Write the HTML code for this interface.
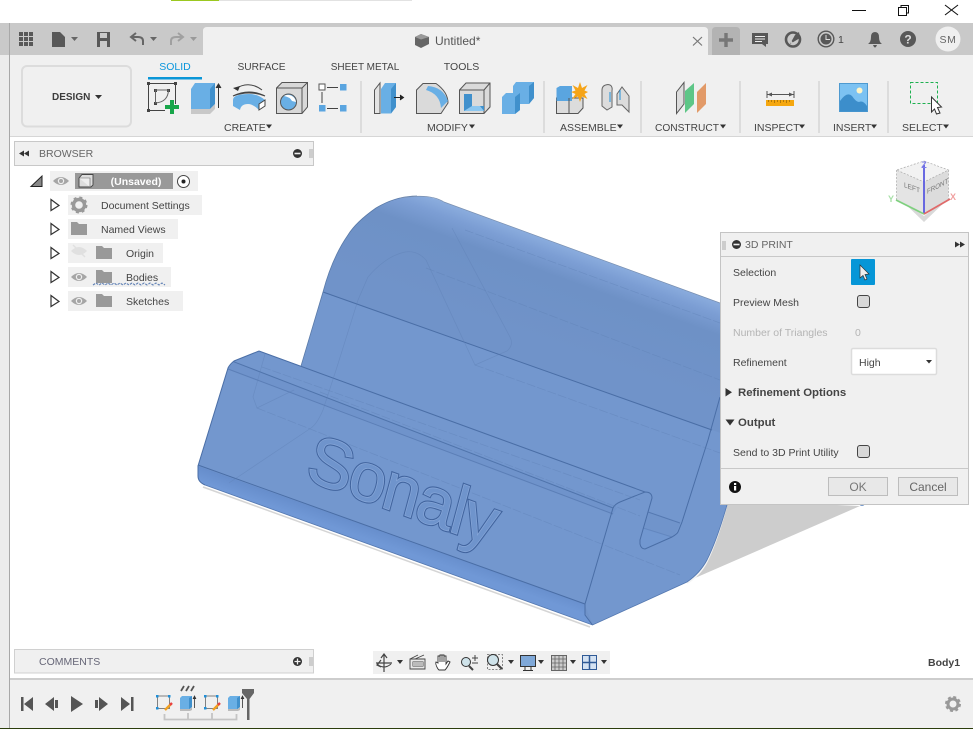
<!DOCTYPE html>
<html>
<head>
<meta charset="utf-8">
<title>Untitled - 3D Print</title>
<style>
html,body{margin:0;padding:0;background:#fff;width:973px;height:729px;overflow:hidden}
svg{display:block;position:absolute;left:0;top:0}
text{font-family:"Liberation Sans",sans-serif;font-size:10.5px;fill:#444}
.c{text-anchor:middle}
.b{font-weight:bold}
.ln{fill:none;stroke:#4a6ea6;stroke-width:1}
.gh{fill:none;stroke:#5c7fb3;stroke-width:.7;opacity:.42}
.ic{fill:none;stroke:#555;stroke-width:1.2}
</style>
</head>
<body>
<svg width="973" height="729" viewBox="0 0 973 729" xmlns="http://www.w3.org/2000/svg">
<defs>
<linearGradient id="backG" gradientUnits="userSpaceOnUse" x1="444" y1="202" x2="410" y2="296">
<stop offset="0" stop-color="#8badde"/><stop offset=".13" stop-color="#7c9ed4"/><stop offset=".32" stop-color="#6e91c6"/><stop offset="1" stop-color="#7093c9"/>
</linearGradient>
<linearGradient id="botG" gradientUnits="userSpaceOnUse" x1="198" y1="466" x2="193.500" y2="479">
<stop offset="0" stop-color="#668dcb"/><stop offset="1" stop-color="#7098d6"/>
</linearGradient>
<g id="eye"><path d="M0 5Q8-3 16 5Q8 13 0 5Z" fill="#a6a6a6"/><circle cx="8" cy="5" r="3.2" fill="#f0f0f0"/><circle cx="8" cy="5" r="2" fill="#a6a6a6"/></g>
<path id="folder" d="M0 0H6L8 2H16V13H0Z" fill="#999"/>
<path id="tri" d="M1 0L9 6L1 11Z" fill="#fff" stroke="#333" stroke-width="1.2"/>
</defs>

<!-- window chrome -->
<rect width="973" height="729" fill="#fff"/>
<rect x="171" y="0" width="48" height="1" fill="#9bc820"/>
<rect x="219" y="0" width="193" height="1" fill="#e2e2e2"/>
<path d="M852 10.5H866" stroke="#111" stroke-width="1"/>
<path d="M898.5 7.5H906.5V15.5H898.5ZM901 7.5V5.5H908.5V13H906.5" fill="none" stroke="#111"/>
<path d="M945 5L958 15M958 5L945 15" stroke="#111" stroke-width="1.1"/>

<rect x="0" y="23" width="973" height="32" fill="#c9c9c9"/>
<rect x="0" y="55" width="9" height="674" fill="#ececec"/>
<rect x="9" y="23" width="1" height="706" fill="#a8a8a8"/>
<rect x="10" y="55" width="963" height="81" fill="#f0f0f0"/>
<rect x="10" y="136" width="963" height="1" fill="#d6d6d6"/>
<path d="M203 55V31Q203 27 207 27H704Q708 27 708 31V55Z" fill="#f0f0f0"/>
<path d="M712 55V31Q712 27 716 27H736Q740 27 740 31V55Z" fill="#b3b3b3"/>
<path d="M726 33V47M719 40H733" stroke="#777" stroke-width="3.4"/>

<!-- quick access -->
<g fill="#585858">
<path d="M19 32h4v4h-4zM24 32h4v4h-4zM29 32h4v4h-4zM19 37h4v4h-4zM24 37h4v4h-4zM29 37h4v4h-4zM19 42h4v4h-4zM24 42h4v4h-4zM29 42h4v4h-4z"/>
<path d="M52 32H60L65 37V47H52Z"/>
<path d="M71 37H78L74.500 41Z" fill="#666"/>
<path d="M97 32H110V47H97ZM100 33V38H107V33ZM100 41V47H107V41Z" fill-rule="evenodd"/>
<path d="M150 37H157L153.500 41Z" fill="#666"/>
<path d="M190 37H197L193.500 41Z" fill="#999"/>
</g>
<path d="M143 45V41Q143 37 138 37H132M136 33L131 37L136 41" fill="none" stroke="#666" stroke-width="2"/>
<path d="M171 45V41Q171 37 176 37H182M178 33L183 37L178 41" fill="none" stroke="#a0a0a0" stroke-width="2"/>

<!-- document tab -->
<path d="M415 37L421 34L429 37V44L421 48L415 45Z" fill="#666"/><path d="M415 37L421 39.500L429 37L421 34Z" fill="#999"/>
<text x="435" y="45" style="font-size:12px;fill:#555">Untitled*</text>
<path d="M693 37L702 45.500M702 37L693 45.500" stroke="#777" stroke-width="1.2"/>

<!-- tab bar right icons -->
<path d="M752 33H768V44H766V47L762 44H752Z" fill="#585858"/><path d="M755 36.500H765M755 39H765M755 41.500H762" stroke="#eee" stroke-width="1"/>
<circle cx="793" cy="39.500" r="7" fill="none" stroke="#585858" stroke-width="2.600"/><path d="M790 44L795 35L799 32L800 38Z" fill="#585858"/><path d="M789 39L793 44" stroke="#c9c9c9" stroke-width="1.500"/>
<circle cx="826" cy="39" r="7.800" fill="none" stroke="#585858" stroke-width="1.400"/><circle cx="826" cy="39" r="5.500" fill="#585858"/><path d="M826 35V39.500H830" stroke="#ddd" fill="none"/>
<text x="838" y="43" style="font-size:10.500px;fill:#444">1</text>
<path d="M868 44Q871 42 871 37Q871 32 875 32Q879 32 879 37Q879 42 882 44Z M873 45H877Q876 47.500 875 47.500Q874 47.500 873 45Z" fill="#585858"/>
<circle cx="908" cy="39" r="8" fill="#585858"/><text x="908" y="43.500" class="c b" style="font-size:12px;fill:#ddd">?</text>
<circle cx="948" cy="39" r="12.500" fill="#efefef"/><text x="948" y="43" class="c" style="font-size:10.500px;letter-spacing:.6px;fill:#666">SM</text>

<!-- design button -->
<rect x="22" y="66" width="109" height="60.500" rx="5" fill="#f0f0f0" stroke="#dcdcdc" stroke-width="2"/>
<text x="52" y="100" class="b" style="font-size:10px;fill:#3c3c3c">DESIGN</text>
<path d="M95 95H102L98.500 99Z" fill="#333"/>

<!-- ribbon tabs -->
<text x="175" y="70" class="c" style="fill:#0a96dc">SOLID</text>
<rect x="148" y="77" width="54" height="2.500" fill="#0a96d7"/>
<text x="261.500" y="70" class="c" style="font-size:10.200px">SURFACE</text>
<text x="365" y="70" class="c" style="font-size:10px">SHEET METAL</text>
<text x="461.500" y="70" class="c">TOOLS</text>

<!-- separators -->
<g fill="#dcdcdc"><rect x="360" y="81" width="2" height="52"/><rect x="543" y="81" width="2" height="52"/><rect x="640" y="81" width="2" height="52"/><rect x="739" y="81" width="2" height="52"/><rect x="818" y="81" width="2" height="52"/><rect x="887" y="81" width="2" height="52"/></g>

<!-- create icons -->
<path d="M148.500 83.500H175.500V104M148.500 83.500V110.500H165" fill="none" stroke="#444"/>
<g fill="#444"><rect x="147" y="82" width="3" height="3"/><rect x="174" y="82" width="3" height="3"/><rect x="147" y="109" width="3" height="3"/><rect x="154" y="89" width="3" height="3"/><rect x="167" y="89" width="3" height="3"/><rect x="154" y="102" width="3" height="3"/></g>
<path d="M155.500 103V90H168.500Q168 102 155.500 103Z" fill="none" stroke="#666"/>
<path d="M165 105H170V100H174V105H179V109H174V114H170V109H165Z" fill="#18a64a"/>

<path d="M191 89L195 83H215V104L210 109H191Z" fill="#69afe5"/>
<path d="M210 89L215 83V104L210 109Z" fill="#4090cc"/>
<path d="M191 109H210L215 104V109L210 114H191Z" fill="#c8c8c8"/>
<path d="M218.500 108V85M216 88L218.500 84L221 88" stroke="#333" fill="#333"/>

<path d="M233 100Q233 94 249 94Q258 94 265 100V106L259 110Q253 104 248 104Q241 104 240 110L233 106Z" fill="#69afe5"/>
<path d="M233 96Q249 88 265 96Q249 90 233 96" fill="none" stroke="#444"/>
<path d="M235 89Q249 80 262 90" fill="none" stroke="#444"/>
<path d="M233 88L240 86L238 91Z" fill="#333"/>
<path d="M259 104L265 100V106L259 110Z" fill="#fff" stroke="#444"/>

<path d="M276.500 88L282 82.500H307.500V107L302 113.500H276.500Z" fill="#d8d8d8" stroke="#555"/>
<path d="M276.500 88H302V113.500M302 88L307.500 82.500" fill="none" stroke="#555"/>
<circle cx="288.500" cy="102" r="8" fill="#69afe5" stroke="#555"/><path d="M284 96A8 8 0 0 1 296 102L292 101Q290 97 284 96Z" fill="#fff"/>

<rect x="319" y="84" width="6" height="6" fill="#fff" stroke="#555"/><rect x="340" y="84" width="6.500" height="6.500" fill="#5aa5e0"/><rect x="319" y="105" width="6.500" height="6.500" fill="#5aa5e0"/><rect x="340" y="105" width="6.500" height="6.500" fill="#5aa5e0"/>
<path d="M327 87.500H338M322 92V103M327 108.500H338" stroke="#444"/>

<text x="224" y="131" style="fill:#444">CREATE</text><path d="M266 124.500H272L269 128.500Z" fill="#333"/>

<!-- modify icons -->
<path d="M374.500 90L380 83V113.500H374.500Z" fill="#e4e4e4" stroke="#555"/>
<path d="M381 89L385 83H396V107L391 113.500H381Z" fill="#69afe5"/><path d="M391 89L396 83V107L391 113.500Z" fill="#4090cc"/>
<path d="M394 97.500H402M400 95L403.500 97.500L400 100" stroke="#222" fill="#222"/>

<path d="M416.500 90L423 83.500H436Q448 92 448 103L441 113.500H416.500Z" fill="#dadada" stroke="#555"/>
<path d="M428 86Q443 87 448 101L441 108Q440 94 426 90Z" fill="#69afe5"/>

<path d="M459.500 90L466 83H490V107L484 113.500H459.500Z" fill="#dadada" stroke="#555"/><path d="M459.500 90H484V113.500M484 90L490 83" fill="none" stroke="#555"/>
<path d="M464 94H472V106H484V111H464Z" fill="#4090cc"/><path d="M472 106L480 106 484 111H464L472 106Z" fill="#8cc7f0"/>

<path d="M502 97L506 93H513V86L516 82H534V98L529 104H520V110L515 114H502Z" fill="#69afe5"/>
<path d="M529 86L534 82V98L529 104ZM515 97L520 93V110L515 114Z" fill="#4090cc"/>
<text x="427" y="131">MODIFY</text><path d="M469 124.500H475L472 128.500Z" fill="#333"/>

<!-- assemble icons -->
<path d="M556.500 98H583V108L578 113.500H556.500Z" fill="#dcdcdc" stroke="#555"/>
<path d="M556.500 88L560 86H572V101H556.500Z" fill="#5aa5e0"/>
<path d="M569 98V113M575 98L583 98" stroke="#555" fill="none"/>
<path d="M580 82L582 88L587.500 85L584.500 90.500L588 92L584.500 94L587.500 99L582 96.500L580 102L578 96.500L572 99L575.500 94L571 92L575.500 90.500L572.500 85L578 88Z" fill="#f5a418"/>
<path d="M602 90Q602 85 608 84.500Q613 85 612 91V107L607 110L602 106Z" fill="#dcdcdc" stroke="#666"/>
<path d="M617 94L622 87L629 96V112L622 105H617Z" fill="#dcdcdc" stroke="#666"/>
<path d="M610 92V102M620 90V100" stroke="#1f8fd8" stroke-width="1"/>
<text x="560" y="131">ASSEMBLE</text><path d="M617 124.500H623L620 128.500Z" fill="#333"/>

<!-- construct -->
<path d="M676.500 92L684 82.500V104L676.500 113.500Z" fill="#dcdcdc" stroke="#555"/>
<path d="M685 91L694 83V104L685 113Z" fill="#5ec687"/>
<path d="M697 92L706 83V104L697 113Z" fill="#e29a68"/>
<text x="655" y="131" style="font-size:10.200px">CONSTRUCT</text><path d="M720 124.500H726L723 128.500Z" fill="#333"/>

<!-- inspect -->
<path d="M767 91V98M794 91V98M767.500 94.500H793.500" stroke="#555" fill="none"/>
<path d="M772 92.500L767.500 94.500L772 96.500ZM789 92.500L793.500 94.500L789 96.500Z" fill="#555"/>
<rect x="766" y="100" width="28" height="6" fill="#f5a70f"/>
<path d="M768.500 100v2M771.500 100v2M774.500 100v3M777.500 100v2M780.500 100v3M783.500 100v2M786.500 100v3M789.500 100v2" stroke="#a26d08" stroke-width=".8"/>
<text x="754" y="131">INSPECT</text><path d="M799 124.500H805L802 128.500Z" fill="#333"/>

<!-- insert -->
<rect x="839.500" y="83.500" width="28" height="28" fill="#7cc2f2" stroke="#4e9ad0"/>
<circle cx="859.500" cy="90.500" r="3" fill="#fff5c8"/>
<path d="M840 108V101Q847 91 852 96Q856 102 859 102Q863 100 867 106V111.500H840Z" fill="#3c8ecb"/>
<text x="833" y="131">INSERT</text><path d="M871 124.500H877L874 128.500Z" fill="#333"/>

<!-- select -->
<rect x="910.500" y="82.500" width="27" height="21" fill="none" stroke="#1eb050" stroke-dasharray="3 2"/>
<path d="M931.500 97L941.500 107L937.500 107.500L940 113L936.500 114L934.500 109L931.500 112Z" fill="#fff" stroke="#333" stroke-width="1"/>
<text x="902" y="131">SELECT</text><path d="M943 124.500H949L946 128.500Z" fill="#333"/>

<!-- canvas -->
<rect x="10" y="137" width="963" height="541" fill="#fff"/>

<!-- shadow -->
<path d="M723 500L860 506L695 578Z" fill="#cdcdcd"/>
<circle cx="862" cy="503" r="3" fill="#6d92c8"/>
<path d="M203 487L590 627" fill="none" stroke="#d5d5d5" stroke-width="1.500"/>
<path d="M687 583Q700 575 707 561Q717 540 726 507" fill="none" stroke="#f4f4f4" stroke-width="2"/>

<!-- model -->
<path d="M417 196Q432 196 444 202L800 332V460L727 505Q717 540 707 560Q700 573 693 577L687 582L592.500 625L205 485Q198 482 198 476V466L228 368Q230 364 234 361L259 351L301 366L323 292Q332 258 348 235Q356 222 376 208Q396 196 417 196Z" fill="url(#backG)"/>
<!-- lighter areas below the main ridge and on the front face -->
<path d="M323 292L301 366L259 351L234 361L228 368L198 466L585 605L592.500 625L687 582L693 577Q700 573 707 560Q717 540 727 505L800 460V460L712 430Z" fill="#7397ce"/>
<path d="M198 466L585 604V615L592.500 625L205 485Q198 482 198 476Z" fill="url(#botG)"/>
<path d="M228 369L233.600 361.700L617 508L613 514Z" fill="#6f93cb"/>
<path d="M648 512L680 523Q678 530 672 537L643 528Z" fill="#7094cb"/>
<path d="M643 528L672 537L645 549Q640 549 640 542Z" fill="#7197d0"/>
<!-- edges -->
<path class="ln" d="M323 292L712 430" stroke-width="1.200"/>
<path class="ln" d="M233.600 361.700L613 508" opacity=".85"/>
<path class="ln" d="M228 369L613 514" opacity=".55"/>
<path class="ln" d="M198 465L585 604"/>
<path class="ln" d="M613 508L585 604V615L592.500 625"/>
<path class="ln" d="M613 508Q615 504 620 502L645 492Q652 492 652 498L640 540V544Q641 549 645 549L672 537Q677 534 678 532L682 522L708 440L720 397"/>
<path class="ln" d="M259 351L645 492" stroke-width="1.200"/>
<path class="ln" d="M648 512L680 523" opacity=".7"/>
<path class="ln" d="M643 528L672 537" opacity=".35"/>
<path class="ln" d="M259 351L234 361Q230 364 228 368L198 466V476Q198 482 205 485"/>
<path d="M205 485L592.500 625L687 582Q700 573 707 560Q717 540 727 505" fill="none" stroke="#5478b0" stroke-width=".8"/>
<path d="M417 196Q396 196 376 208Q356 222 348 235Q332 258 323 292L301 366" fill="none" stroke="#5a7aa8" stroke-width=".8"/>
<path d="M400 198Q430 193 444 202L720 303" fill="none" stroke="#7a90b0" stroke-width=".7"/>
<!-- ghost lines -->
<path class="gh" d="M452 228L510 337Q514 345 507 351L475 365L426 260Q417 250 405 252Q386 256 368 277L358 300L337 367L323 410Q317 424 311 428L229 483"/>
<path class="gh" d="M465 230L720 323" stroke-dasharray="9 2"/>
<path class="gh" d="M426 268L720 380" stroke-dasharray="9 2"/>
<path class="gh" d="M475 365L720 453" stroke-dasharray="9 2"/>
<path class="gh" d="M265 354L253 397L257 408L294 390"/>
<path class="gh" d="M257 408L680 575" stroke-dasharray="9 2"/>
<path class="gh" d="M262 367L640 500" stroke-dasharray="9 2"/>
<path class="gh" d="M320 392L640 516" stroke-dasharray="9 2"/>
<!-- embossed name -->
<text transform="matrix(.94 .34 -.26 .97 304 479)" style="font-size:68px;letter-spacing:-1.700px;fill:#6a8ec6;stroke:#41649e;stroke-width:2.800">Sonaly</text>
<text transform="matrix(.94 .34 -.26 .97 304 479)" aria-hidden="true" style="font-size:68px;letter-spacing:-1.700px;fill:#6f94cc;stroke:#86a6d8;stroke-width:.7">Sonaly</text>

<!-- browser -->
<rect x="14.500" y="141.500" width="299" height="24" fill="#f0f0f0" stroke="#c8c8c8"/>
<path d="M24 150.500L19 153.500L24 156.500ZM29 150.500L24 153.500L29 156.500Z" fill="#333"/>
<text x="39" y="157" style="fill:#666">BROWSER</text>
<circle cx="297.500" cy="153.500" r="4.500" fill="#333"/><rect x="294.500" y="152.700" width="6" height="1.600" fill="#f0f0f0"/>
<path d="M310 149V158M312 149V158" stroke="#999" stroke-width=".8"/>

<path d="M31 186.500L42 176V186.500Z" fill="#888" stroke="#222"/>
<rect x="50" y="171" width="148" height="20" fill="#f0f0f0"/>
<use href="#eye" x="53" y="176"/>
<rect x="75" y="173" width="98" height="16" fill="#999"/>
<path d="M79 178L82 174.500H93V185L91 187H79Z" fill="#ddd" stroke="#444" stroke-width=".9"/>
<path d="M79 178H90V187" fill="#eee" stroke="#666" stroke-width=".6"/>
<text x="136" y="185" class="c b" style="fill:#fff">(Unsaved)</text>
<circle cx="183.500" cy="181.500" r="6" fill="#fff" stroke="#444"/><circle cx="183.500" cy="181.500" r="2" fill="#222"/>

<g>
<rect x="68" y="195" width="134" height="20" fill="#f0f0f0"/>
<rect x="68" y="219" width="110" height="20" fill="#f0f0f0"/>
<rect x="68" y="243" width="95" height="20" fill="#f0f0f0"/>
<rect x="68" y="267" width="103" height="20" fill="#f0f0f0"/>
<rect x="68" y="291" width="115" height="20" fill="#f0f0f0"/>
</g>
<use href="#tri" x="50" y="199.500"/><use href="#tri" x="50" y="223.500"/><use href="#tri" x="50" y="247.500"/><use href="#tri" x="50" y="271.500"/><use href="#tri" x="50" y="295.500"/>
<!-- gear -->
<circle cx="79" cy="205" r="5.500" fill="none" stroke="#999" stroke-width="3.400"/>
<circle cx="79" cy="205" r="7.500" fill="none" stroke="#999" stroke-width="2" stroke-dasharray="3 2.900"/>
<text x="101" y="209">Document Settings</text>
<use href="#folder" x="71" y="222"/>
<text x="101" y="233">Named Views</text>
<path d="M71 251Q79 243 87 251Q79 259 71 251Z" fill="#e0e0e0"/><path d="M73 245L85 257" stroke="#e0e0e0" stroke-width="1.500"/>
<use href="#folder" x="96" y="246"/>
<text x="126" y="257">Origin</text>
<use href="#eye" x="71" y="272"/>
<use href="#folder" x="96" y="270"/>
<text x="126" y="281">Bodies</text>
<path d="M93 285l3-2 3 2 3-2 3 2 3-2 3 2 3-2 3 2 3-2 3 2 3-2 3 2 3-2 3 2 3-2 3 2 3-2 3 2 3-2 3 2 3-2 3 2 3-2 3 2" fill="none" stroke="#5f80b5" stroke-width="1.100" stroke-dasharray="2.500 1.200"/>
<use href="#eye" x="71" y="296"/>
<use href="#folder" x="96" y="294"/>
<text x="126" y="305">Sketches</text>

<!-- viewcube -->
<path d="M898 197L924 216L950 197L924 222Z" fill="#c9c9c9" opacity=".7"/>
<path d="M896.500 170L924 182V215L896.500 200Z" fill="#e4e4e4"/>
<path d="M948.500 170L924 182V215L948.500 200Z" fill="#dcdcdc"/>
<path d="M924 161L948.500 170L924 182L896.500 170Z" fill="#f2f2f2"/>
<path d="M924 161L948.500 170L924 182L896.500 170ZM896.500 170V200M948.500 170V200" fill="none" stroke="#aaa" stroke-width=".7" stroke-dasharray="2 1.500"/>
<path d="M924 165V214" stroke="#5a5ae0" stroke-width="1.800"/>
<path d="M924 214L896 200" stroke="#7fd07f" stroke-width="1.800"/>
<path d="M924 214L950 199" stroke="#e06a6a" stroke-width="1.800"/>
<text transform="matrix(.94 .34 0 1 904 187)" style="font-size:7px;fill:#777">LEFT</text>
<text transform="matrix(.88 -.46 0 1 927 194)" style="font-size:7px;fill:#777">FRONT</text>
<text x="924" y="168" class="c b" style="font-size:9px;fill:#7c7ce8">Z</text>
<text x="891" y="202" class="c b" style="font-size:9px;fill:#a8e0a8">Y</text>
<text x="953" y="200" class="c b" style="font-size:9px;fill:#f0a0a0">X</text>

<!-- 3D print panel -->
<rect x="720.500" y="232.500" width="248" height="272" fill="#f0f0f0" stroke="#c4c4c4"/>
<path d="M721 256.500H968M721 468.500H968" stroke="#c8c8c8"/>
<path d="M723 241V250M725 241V250" stroke="#999" stroke-width=".8"/>
<circle cx="736.500" cy="244.500" r="4.500" fill="#333"/><rect x="733.500" y="243.700" width="6" height="1.600" fill="#f0f0f0"/>
<text x="745" y="248" style="fill:#666">3D PRINT</text>
<path d="M955 241.500L960 244.500L955 247.500ZM960 241.500L965 244.500L960 247.500Z" fill="#333"/>

<text x="733" y="276">Selection</text>
<rect x="851" y="259" width="24" height="26" rx="1" fill="#0696d7"/>
<path d="M860 265L869 274L865 274.500L867 279L865 280L863 275.500L860 278Z" fill="#eee" stroke="#333" stroke-width=".7"/>

<text x="733" y="306">Preview Mesh</text>
<rect x="857.500" y="295.500" width="12" height="12" rx="2.500" fill="#d8d8d8" stroke="#444"/>

<text x="733" y="336" style="fill:#b4b4b4">Number of Triangles</text>
<text x="855" y="336" style="fill:#b4b4b4">0</text>

<text x="733" y="366">Refinement</text>
<rect x="851.500" y="348.500" width="85" height="26" rx="1.500" fill="#fff" stroke="#dcdcdc" stroke-width="1.500"/>
<text x="859" y="366">High</text>
<path d="M926 360H932L929 363.500Z" fill="#333"/>

<path d="M725.500 388V396.500L732 392.200Z" fill="#333"/>
<text x="738" y="396" class="b" style="font-size:11.400px">Refinement Options</text>
<path d="M725.500 419.500H734.500L730 425.500Z" fill="#333"/>
<text x="738" y="426" class="b" style="font-size:11.400px">Output</text>

<text x="733" y="456">Send to 3D Print Utility</text>
<rect x="857.500" y="445.500" width="12" height="12" rx="2.500" fill="#d8d8d8" stroke="#444"/>

<circle cx="735" cy="487" r="6" fill="#111"/>
<rect x="734" y="486" width="2.200" height="4.500" fill="#fff"/><rect x="734" y="483" width="2.200" height="2" fill="#fff"/>
<rect x="828.500" y="477.500" width="59" height="18" fill="#e8e8e8" stroke="#bdbdbd"/>
<text x="858" y="491" class="c" style="font-size:12px;fill:#777">OK</text>
<rect x="898.500" y="477.500" width="59" height="18" fill="#e8e8e8" stroke="#bdbdbd"/>
<text x="928" y="491" class="c" style="font-size:12px;fill:#666">Cancel</text>

<!-- comments -->
<rect x="14.500" y="649.500" width="299" height="23.500" fill="#f0f0f0" stroke="#d0d0d0"/>
<text x="39" y="665" style="fill:#667">COMMENTS</text>
<circle cx="297.500" cy="661.500" r="4.500" fill="#333"/><path d="M294.500 661.500H300.500M297.500 658.500V664.500" stroke="#f0f0f0" stroke-width="1.300"/>
<path d="M310 657V666M312 657V666" stroke="#999" stroke-width=".8"/>

<!-- nav bar -->
<rect x="373" y="651" width="237" height="23" fill="#f0f0f0"/>
<path d="M384 655V672M381 658L384 654L387 658M376 663H392M381 667L377 665 381 660" fill="none" stroke="#444" stroke-width="1.200"/>
<path d="M377 664Q384 670 391 664" fill="none" stroke="#444"/>
<path d="M397 660H403L400 664Z" fill="#333"/>
<path d="M410 659V669H425V659ZM413 662H423V666H413Z M410 659L418 655M415 659L424 655" fill="#e8e8e8" stroke="#444" stroke-width=".9"/>
<rect x="413" y="662" width="10" height="4" fill="#bbb"/>
<path d="M438 669Q435 664 436 662L438 663V656L440 656V662V655H442V662V655H444V662V656H446V664L448 661L450 662Q447 668 445 670H439Z" fill="#fff" stroke="#333" stroke-width=".9"/>
<circle cx="466" cy="662" r="4.500" fill="#cfe3ea" stroke="#333"/><path d="M469 666L473 670" stroke="#444" stroke-width="2"/>
<path d="M472 658H478M475 655V661M472 663H478" stroke="#444" fill="none"/>
<rect x="487.500" y="654.500" width="15" height="15" fill="none" stroke="#666" stroke-dasharray="2 1.500" stroke-width=".8"/>
<circle cx="493" cy="660" r="5.500" fill="#cfe3ea" stroke="#333"/><path d="M497 664L502 669" stroke="#444" stroke-width="2.200"/>
<path d="M508 660H514L511 664Z" fill="#333"/>
<rect x="520.500" y="655.500" width="15" height="11" fill="#7fa8d8" stroke="#333"/><path d="M525 667V670M531 667V670M523 670.500H533" stroke="#333"/>
<path d="M538 660H544L541 664Z" fill="#333"/>
<rect x="551.500" y="655.500" width="15" height="15" fill="#ccc" stroke="#666"/><path d="M551 659h16M551 663h16M551 667h16M555 655v16M559 655v16M563 655v16" stroke="#666" stroke-width=".8"/>
<path d="M570 660H576L573 664Z" fill="#333"/>
<rect x="582.500" y="655.500" width="14" height="14" fill="#d4e2f2" stroke="#2f5a96"/><path d="M582 662.500H597M589.500 655V670" stroke="#2f5a96" stroke-width="1.500"/>
<path d="M601 660H607L604 664Z" fill="#333"/>

<text x="928" y="666" class="b" style="fill:#444">Body1</text>

<!-- timeline -->
<rect x="10" y="678" width="963" height="2" fill="#cdcdcd"/>
<rect x="10" y="680" width="963" height="48" fill="#f0f0f0"/>
<rect x="0" y="728" width="973" height="1" fill="#2c3d0c"/>
<g fill="#555">
<path d="M21 697H23.500V711H21ZM33 697V711L24 704Z"/>
<path d="M45 704L54 697V711ZM55 700H58V708H55Z"/>
<path d="M71 696L83 704L71 712Z"/>
<path d="M108 704L99 697V711ZM95 700H98V708H95Z"/>
<path d="M121 697L130 704L121 711ZM131 697H133.500V711H131Z"/>
</g>
<g>
<rect x="157.500" y="696" width="12" height="12.500" fill="none" stroke="#666" stroke-width=".8"/>
<rect x="156" y="695" width="2.500" height="2.500" fill="#1f8fd8"/><rect x="168" y="695" width="2.500" height="2.500" fill="#1f8fd8"/><rect x="156" y="707" width="2.500" height="2.500" fill="#1f8fd8"/>
<path d="M165 710L171 704" stroke="#f0a020" stroke-width="2.400"/><path d="M170 705L172 703" stroke="#e84040" stroke-width="2.400"/>
<rect x="205.500" y="696" width="12" height="12.500" fill="none" stroke="#666" stroke-width=".8"/>
<rect x="204" y="695" width="2.500" height="2.500" fill="#1f8fd8"/><rect x="216" y="695" width="2.500" height="2.500" fill="#1f8fd8"/><rect x="204" y="707" width="2.500" height="2.500" fill="#1f8fd8"/>
<path d="M213 710L219 704" stroke="#f0a020" stroke-width="2.400"/><path d="M218 705L220 703" stroke="#e84040" stroke-width="2.400"/>
<path d="M180 698L182 696H192V707L190 709H180Z" fill="#69afe5"/><path d="M189 698L192 696V707L189 709Z" fill="#4090cc"/><path d="M180 709H190L192 707V710L190 711H180Z" fill="#bbb"/>
<path d="M194.500 708V697M193 699L194.500 696L196 699" stroke="#333" fill="#333" stroke-width=".8"/>
<path d="M228 698L230 696H240V707L238 709H228Z" fill="#69afe5"/><path d="M237 698L240 696V707L237 709Z" fill="#4090cc"/><path d="M228 709H238L240 707V710L238 711H228Z" fill="#bbb"/>
<path d="M242.500 708V697M241 699L242.500 696L244 699" stroke="#333" fill="#333" stroke-width=".8"/>
<path d="M181 691L184 686M186 691L189 686M191 691L194 686" stroke="#555" stroke-width="1.800"/>
<path d="M164.500 714V719.500H236.500V714M188 713V719M212 713V719" fill="none" stroke="#c4c4c4" stroke-width="1.800"/>
<path d="M242 689H254V693L249.500 699V720H247V699L242 693Z" fill="#666"/>
</g>
<!-- settings gear -->
<circle cx="953" cy="704" r="5" fill="none" stroke="#999" stroke-width="3"/>
<circle cx="953" cy="704" r="7" fill="none" stroke="#999" stroke-width="2" stroke-dasharray="3 2.500"/>
</svg>
</body>
</html>
